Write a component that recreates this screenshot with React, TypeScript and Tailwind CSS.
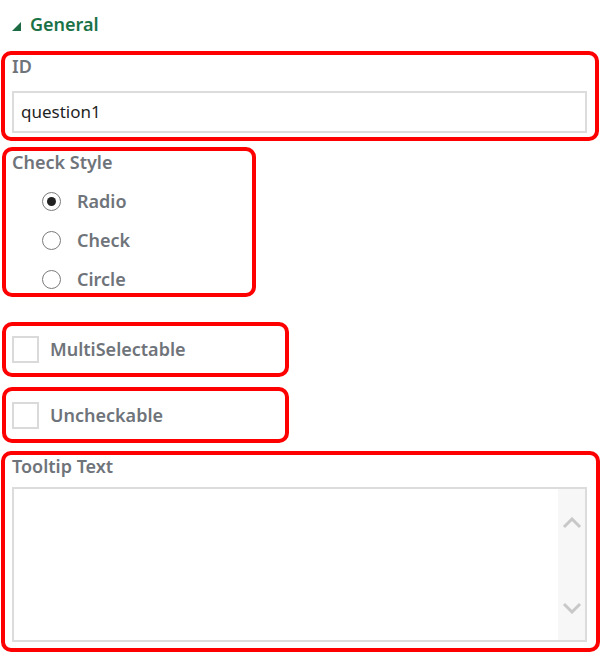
import React from 'react';

const font = { fontFamily: '"Segoe UI", "Noto Sans", "Open Sans", sans-serif' };

const Box: React.FC<{ className: string; children: React.ReactNode }> = ({ className, children }) => (
  <div className={`border-4 border-[#ff0000] rounded-[10px] ${className}`}>{children}</div>
);

const Radio: React.FC<{ label: string; checked?: boolean }> = ({ label, checked }) => (
  <div className="flex items-center h-[39px] pl-[36px]">
    <div className="w-[19px] h-[19px] rounded-full border-[1.5px] border-[#7a7a7a] bg-white flex items-center justify-center">
      {checked && <div className="w-[9px] h-[9px] rounded-full bg-[#222]" />}
    </div>
    <span className="ml-[16px] text-[18px] font-semibold text-[#6f747a]">{label}</span>
  </div>
);

const Check: React.FC<{ label: string }> = ({ label }) => (
  <div className="flex items-center h-full pl-[6px]">
    <div className="w-[27px] h-[27px] border-2 border-[#dadada] bg-white" />
    <span className="ml-[11px] text-[18px] font-semibold text-[#6f747a]">{label}</span>
  </div>
);

export default function App() {
  return (
    <div className="w-[601px] h-[658px] bg-white overflow-hidden" style={font}>
      <div className="h-[51px] flex items-center pl-[12px] pb-[2px]">
        <svg width="9" height="9" viewBox="0 0 9 9" className="mt-[4px]">
          <polygon points="9,0 9,9 0,9" fill="#1d6b43" />
        </svg>
        <span className="ml-[9px] text-[18px] font-semibold text-[#1a7247]">General</span>
      </div>

      <Box className="ml-[1px] w-[598px] h-[90px] pl-[7px]">
        <div className="text-[18px] leading-[22px] font-semibold text-[#6f747a]">ID</div>
        <div className="mt-[14px] w-[575px] h-[42px] border-2 border-[#dcdcdc] flex items-center pl-[7px] text-[17px] text-[#1f1f1f]">
          question1
        </div>
      </Box>

      <Box className="mt-[6px] ml-[2px] w-[254px] h-[150px] pl-[6px]">
        <div className="text-[18px] leading-[22px] font-semibold text-[#6f747a]">Check Style</div>
        <div className="mt-[9px] -ml-[6px]">
          <Radio label="Radio" checked />
          <Radio label="Check" />
          <Radio label="Circle" />
        </div>
      </Box>

      <Box className="mt-[25px] ml-[2px] w-[287px] h-[55px]">
        <Check label="MultiSelectable" />
      </Box>

      <Box className="mt-[10px] ml-[2px] w-[287px] h-[56px]">
        <Check label="Uncheckable" />
      </Box>

      <Box className="mt-[8px] ml-[1px] w-[599px] h-[201px] pl-[7px]">
        <div className="text-[18px] leading-[22px] font-semibold text-[#6f747a]">Tooltip Text</div>
        <div className="mt-[10px] w-[575px] h-[155px] border-2 border-[#dcdcdc] flex">
          <div className="flex-1" />
          <div className="w-[27px] bg-[#f7f7f7] flex flex-col items-center justify-between pt-[28px] pb-[26px]">
            <svg width="20" height="12" viewBox="0 0 20 12">
              <polyline points="2,10 10,2 18,10" fill="none" stroke="#c8c8c8" strokeWidth="3" />
            </svg>
            <svg width="20" height="12" viewBox="0 0 20 12">
              <polyline points="2,2 10,10 18,2" fill="none" stroke="#c8c8c8" strokeWidth="3" />
            </svg>
          </div>
        </div>
      </Box>
    </div>
  );
}
